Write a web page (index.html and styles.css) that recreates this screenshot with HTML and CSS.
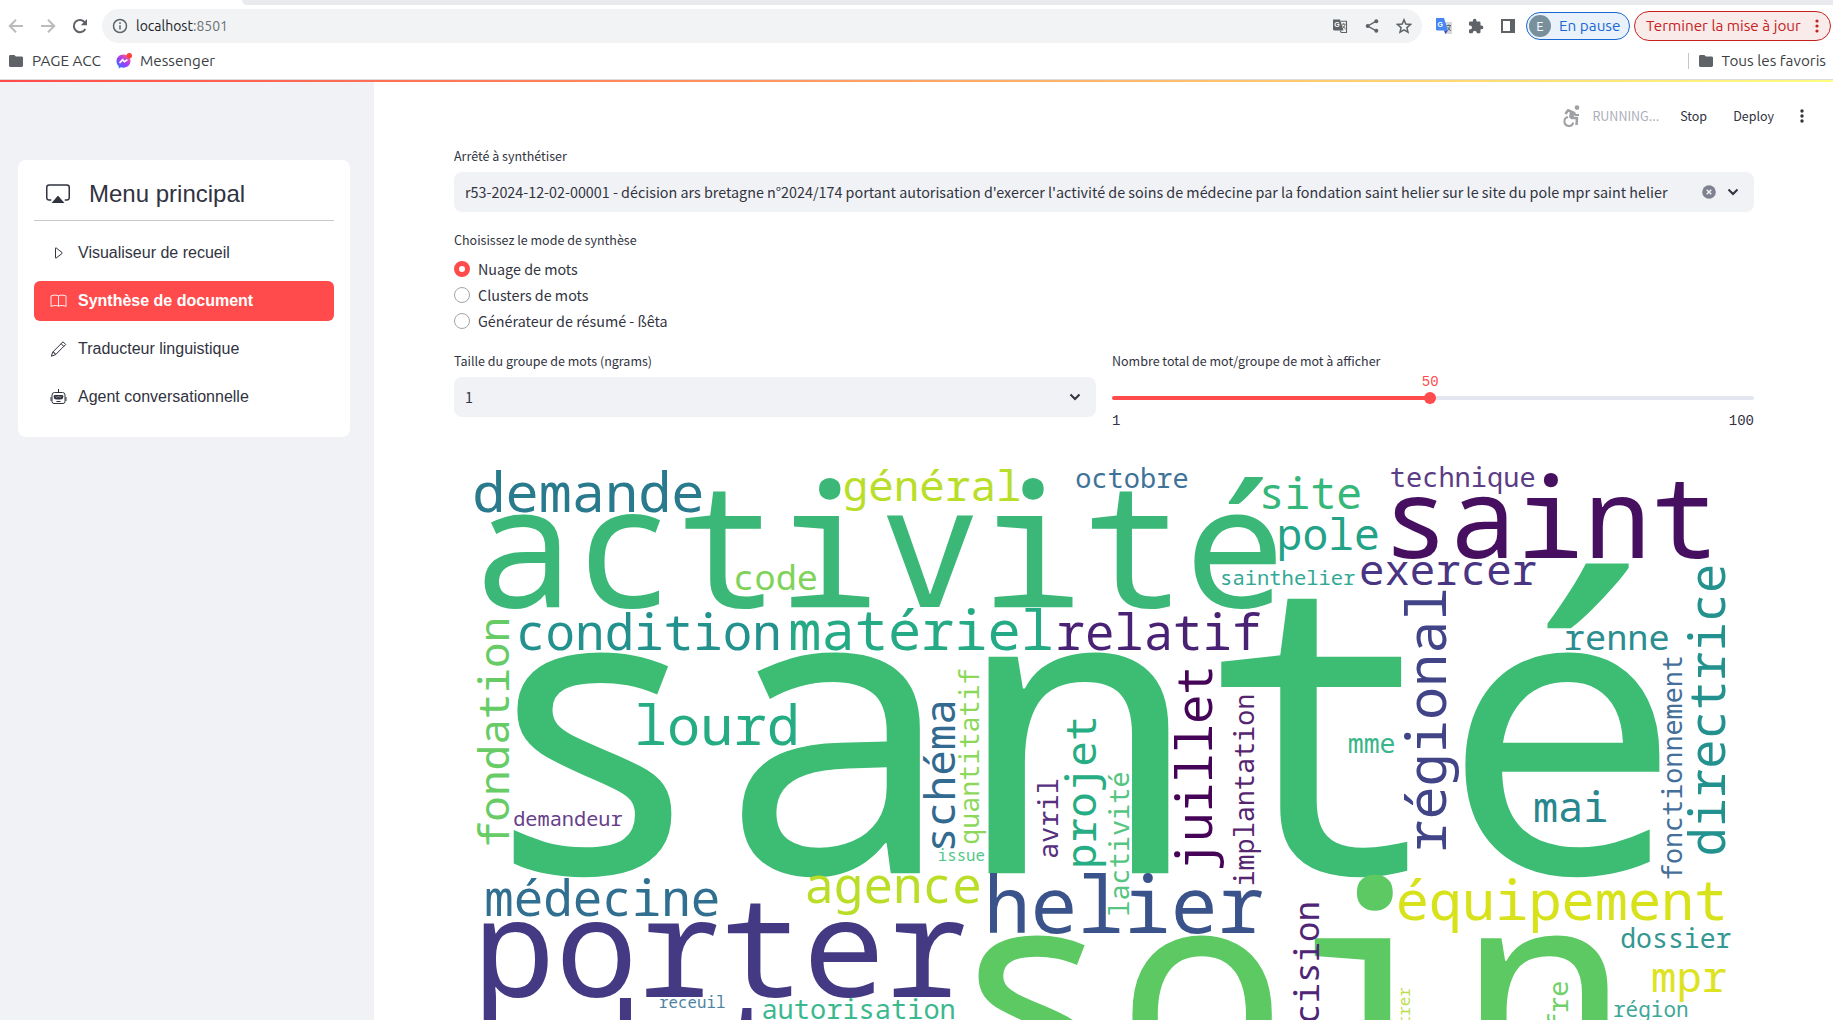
FILE: index.html
```html
<!DOCTYPE html>
<html lang="fr">
<head>
<meta charset="utf-8">
<title>Synthèse de document</title>
<link rel="stylesheet" href="styles.css">
</head>
<body>
<header class="browser">
  <div class="tabstrip"><div class="tab"></div><div class="tabrest"></div></div>
  <div class="toolbar">
    <svg class="nav dim" viewBox="0 0 16 16"><path d="M15 8H2M8 1.8 1.8 8 8 14.2"/></svg>
    <svg class="nav dim" viewBox="0 0 16 16"><path d="M1 8h13M8 1.8 14.2 8 8 14.2"/></svg>
    <svg class="nav" viewBox="0 0 16 16"><path d="M13.3 11A6.1 6.1 0 1 1 13 4.6"/><path d="M15 1v6.2H8.8z" fill="#5f6368" stroke="none"/></svg>
    <div class="address">
      <svg class="info" viewBox="0 0 16 16"><circle cx="8" cy="8" r="6.5"/><path d="M8 7.2v4.4M8 4.2v1.7"/></svg>
      <span class="url">localhost<span class="port">:8501</span></span>
      <svg class="pic tr" viewBox="0 0 16 16"><path d="M1 1.5h7l3.5 11H2.5A1.5 1.5 0 0 1 1 11z" fill="#5f6368"/><path d="M8.6 3.2h5.9v11.3H9.2l-1-2" fill="none" stroke="#5f6368" stroke-width="1.1"/><text x="2.3" y="9.2" class="gl">G</text><path d="M9.7 6.2h4M11.6 5.2v1M10.3 10.7c1.6-1 2.4-2.5 2.6-4.3M10.6 7.7l3 3.6" fill="none" stroke="#5f6368" stroke-width=".9"/></svg>
      <svg class="pic" viewBox="0 0 16 16"><path d="M12.3 3.2 3.7 8l8.600 4.800" fill="none" stroke="#5f6368" stroke-width="1.400"/><g fill="#5f6368"><circle cx="12.300" cy="3.200" r="2"/><circle cx="3.700" cy="8" r="2"/><circle cx="12.300" cy="12.800" r="2"/></g></svg>
      <svg class="pic" viewBox="0 0 16 16"><path d="m8 1.800 1.800 4.300 4.700.4-3.600 3.100 1.100 4.600L8 11.800l-4 2.400 1.100-4.600-3.600-3.100 4.700-.4z" fill="none" stroke="#5f6368" stroke-width="1.500"/></svg>
    </div>
    <div class="extensions">
      <svg class="pic" viewBox="0 0 16 16"><path d="M7 4h9v12H9z" fill="#d5d7da"/><path d="M0 0h8l4 12.500H1.200A1.200 1.200 0 0 1 0 11.300z" fill="#4687f4"/><path d="M8 12.500h4L9.500 16z" fill="#3a4bb8"/><text x="1.600" y="9" class="gl">G</text><path d="M10.500 7.500h4.500M12.700 6.500v1M11.500 12.500c1.600-1 2.400-2.800 2.600-4.800M11.600 9l3 4" fill="none" stroke="#5d6d7a"/></svg>
      <svg class="pic" viewBox="0 0 16 16"><path d="M13.500 7.600h-1V4.800c0-.7-.6-1.300-1.300-1.300H8.500V2.600a1.800 1.800 0 0 0-3.600 0v.9H2.200C1.500 3.500 1 4.100 1 4.800v2.600h1a2 2 0 0 1 0 4H1V14c0 .7.500 1.300 1.200 1.300h2.600v-1a2 2 0 0 1 3.900 0v1h2.500c.700 0 1.300-.6 1.300-1.300v-2.700h1a1.850 1.850 0 0 0 0-3.700z" fill="#5f6368"/></svg>
      <svg class="pic" viewBox="0 0 16 16"><path d="M1 1h14v14H1zM3 3v10h7V3z" fill="#5f6368" fill-rule="evenodd"/></svg>
    </div>
    <div class="profile"><span class="avatar">E</span>En pause</div>
    <div class="update">Terminer la mise à jour
      <svg width="4" height="14" viewBox="0 0 4 14" fill="#c5221f"><circle cx="2" cy="2" r="1.600"/><circle cx="2" cy="7" r="1.600"/><circle cx="2" cy="12" r="1.600"/></svg>
    </div>
  </div>
  <div class="bookmarks">
    <svg class="folder" viewBox="0 0 14 12"><path d="M1.400 0h4l1.500 1.500h5.700c.800 0 1.400.600 1.400 1.400v7.700c0 .800-.6 1.400-1.400 1.400H1.400C.6 12 0 11.400 0 10.600V1.400C0 .6.6 0 1.400 0z"/></svg>
    <span class="bm first">PAGE ACC</span>
    <svg class="msgr" viewBox="0 0 16 16"><defs><linearGradient id="mg" x1="0" y1="1" x2=".8" y2="0"><stop offset="0" stop-color="#168aff"/><stop offset=".5" stop-color="#9a3bff"/><stop offset="1" stop-color="#ff5a8c"/></linearGradient></defs><path d="M7.500 1.500C3.500 1.500.5 4.400.5 8.300c0 2 .8 3.700 2.200 4.900V15.500l2.200-1.200c.8.3 1.700.4 2.600.4 4 0 7-2.900 7-6.600S11.500 1.500 7.500 1.500z" fill="url(#mg)"/><path d="m3.500 10 3-3.200 2 1.800 3-2" fill="none" stroke="#fff" stroke-width="1.700"/><circle cx="13.300" cy="2.700" r="2.700" fill="#ff4136"/></svg>
    <span class="bm">Messenger</span>
    <div class="all"><svg class="folder" viewBox="0 0 14 12"><path d="M1.400 0h4l1.500 1.500h5.700c.800 0 1.400.600 1.400 1.400v7.700c0 .800-.6 1.400-1.400 1.400H1.400C.6 12 0 11.400 0 10.600V1.400C0 .6.6 0 1.400 0z"/></svg><span>Tous les favoris</span></div>
  </div>
</header>
<div class="decoration"></div>
<div class="app">
  <aside class="sidebar">
    <nav class="menu">
      <div class="menu-title">
        <svg width="24" height="24" viewBox="0 0 16 16" fill="none" stroke="#31333f"><path d="M3.500 12h-1.400A1.600 1.600 0 0 1 .5 10.500V3.600a1.600 1.600 0 0 1 1.600-1.600h11.800a1.600 1.600 0 0 1 1.600 1.600V10.500a1.600 1.600 0 0 1-1.600 1.500h-1.400"/><path d="M3.700 14 7.600 9.500a.5.5 0 0 1 .8 0l3.900 4.500z" fill="#31333f" stroke="none"/></svg>
        <span>Menu principal</span>
      </div>
      <a class="item"><svg viewBox="0 0 16 16"><path d="M5 3.200v9.600c0 .4.300.5.600.3l6-4.700c.3-.2.300-.6 0-.8l-6-4.700c-.3-.2-.6-.1-.6.300z"/></svg>Visualiseur de recueil</a>
      <a class="item active"><svg viewBox="0 0 16 16"><path d="M8 2.900C6.300 1.800 3 1.900.5 2.900v10.500c2.300-1 5.700-1.200 7.500-.2 1.800-1 5.200-.8 7.500.2V2.900C13 1.900 9.700 1.800 8 2.900zV13"/></svg>Synthèse de document</a>
      <a class="item"><svg viewBox="0 0 16 16"><path d="M12.500.8 15.200 3.500 5 13.700.8 15.200 2.300 11zM10.600 2.700l2.700 2.700M2.300 11l1.400.5v.8h.9L5 13.700"/></svg>Traducteur linguistique</a>
      <a class="item"><svg viewBox="0 0 16 16"><path d="M8 3V0M4 3.500h8A2.500 2.500 0 0 1 14.500 6v6.500A2 2 0 0 1 12.500 14.500h-9a2 2 0 0 1-2-2V6A2.500 2.500 0 0 1 4 3.500zM.5 8v4M15.500 8v4M6 12.500h4"/><path d="M4.500 6h7a1.400 1.400 0 0 1 1.400 1.400l-.5 1.800c-.3.800-.9 1-1.500 1.100-2 .3-4 .3-5.900 0-.6-.1-1.200-.3-1.400-1.100L3.100 7.400A1.400 1.400 0 0 1 4.500 6z" fill="#31333f" stroke="none"/><path d="m5 7.400 1.300.9 1.700-.9 1.700.9L11 7.400" stroke="#fff" stroke-width=".5"/></svg>Agent conversationnelle</a>
    </nav>
  </aside>
  <main class="main">
    <div class="status">
      <svg width="17" height="22" viewBox="0 0 17 22" fill="none" stroke="#9fa0a4"><circle cx="14" cy="2.600" r="2.300" fill="#9fa0a4" stroke="none"/><path d="M2.500 9 5 5.200l6 2.800-2.500 5h5.500l-.5 7" stroke-width="2.500" stroke-linejoin="round"/><path d="M7 6l5 2.500-3.500 5-2.500-1z" fill="#9fa0a4" stroke="none"/><path d="M11 8l1.500 2H16" stroke-width="2.200"/><path d="M5 12a4.500 4.500 0 1 0 5.300 5.500" stroke-width="2"/></svg>
      <span class="running">RUNNING...</span><span class="stop">Stop</span><span class="deploy">Deploy</span>
      <svg class="kebab" width="4" height="14" viewBox="0 0 4 14" fill="#31333f"><circle cx="2" cy="2" r="1.700"/><circle cx="2" cy="7" r="1.700"/><circle cx="2" cy="12" r="1.700"/></svg>
    </div>
    <div class="label">Arrêté à synthétiser</div>
    <div class="select">
      <span class="value">r53-2024-12-02-00001 - décision ars bretagne n°2024/174 portant autorisation d'exercer l'activité de soins de médecine par la fondation saint helier sur le site du pole mpr saint helier</span>
      <svg width="14" height="14" viewBox="0 0 14 14"><circle cx="7" cy="7" r="6.800" fill="#7f828e"/><path d="m4.700 4.700 4.600 4.600m0-4.600L4.700 9.300" stroke="#f0f2f6" stroke-width="1.500"/></svg>
      <svg class="chev" width="12" height="8" viewBox="0 0 12 8"><path d="m1.500 1.500 4.500 4.500 4.500-4.500"/></svg>
    </div>
    <div class="label second">Choisissez le mode de synthèse</div>
    <div class="radios">
      <label class="radio on"><i></i>Nuage de mots</label>
      <label class="radio"><i></i>Clusters de mots</label>
      <label class="radio"><i></i>Générateur de résumé - ßêta</label>
    </div>
    <div class="cols">
      <div class="col">
        <div class="label">Taille du groupe de mots (ngrams)</div>
        <div class="select"><span class="value">1</span><svg class="chev" width="12" height="8" viewBox="0 0 12 8"><path d="m1.500 1.500 4.500 4.500 4.500-4.500"/></svg></div>
      </div>
      <div class="col">
        <div class="label">Nombre total de mot/groupe de mot à afficher</div>
        <div class="slider">
          <div class="track"><div class="thumb" style="left:49.495%"><span>50</span></div></div>
          <div class="ticks"><span>1</span><span>100</span></div>
        </div>
      </div>
    </div>
    <svg class="cloud" width="1300" height="564" viewBox="454 455.500 1300 564">
      <text x="471.3" y="872.7" font-size="404.1" fill="#3dbc74">santé</text>
      <text x="946.1" y="1090.300" font-size="284.5" fill="#5dc963">soin</text>
      <text x="472.8" y="606.7" font-size="169.4" fill="#3bb878">activité</text>
      <text x="472.800" y="996" font-size="137.500" fill="#443a83">porter</text>
      <text x="566.500" y="1092.400" font-size="124" fill="#443a83">date</text>
      <text x="1381.9" y="557.7" font-size="112.1" fill="#460f60">saint</text>
      <text x="983.8" y="932.7" font-size="77.9" fill="#3a538b">helier</text>
      <text x="472.3" y="511.7" font-size="55.3" fill="#2a7a8e">demande</text>
      <text x="842.7" y="500.7" font-size="42.6" fill="#b8de29">général</text>
      <text x="1075.2" y="487.7" font-size="27" fill="#3f7299">octobre</text>
      <text x="1258.800" y="508.7" font-size="43" fill="#35b779">site</text>
      <text x="1276.6" y="549.3" font-size="43" fill="#22a287">pole</text>
      <text x="1220.1" y="584.7" font-size="20.5" fill="#33a896">sainthelier</text>
      <text x="733.3" y="589" font-size="35.3" fill="#7fd35a">code</text>
      <text x="1389.8" y="486.3" font-size="27" fill="#5a3d84">technique</text>
      <text x="1359" y="584.3" font-size="42.400" fill="#4a3582">exercer</text>
      <text x="516.1" y="649.3" font-size="49.2" fill="#23918d">condition</text>
      <text x="788.2" y="649.3" font-size="55.4" fill="#24aa84">matériel</text>
      <text x="1055.500" y="649.3" font-size="49" fill="#4a2275">relatif</text>
      <text x="633.9" y="744.3" font-size="55.4" fill="#26ac82">lourd</text>
      <text x="1563.800" y="649.3" font-size="35.300" fill="#2c8d90">renne</text>
      <text x="1347.7" y="752.3" font-size="26.6" fill="#39b58a">mme</text>
      <text x="1532.9" y="821.7" font-size="42" fill="#28868e">mai</text>
      <text x="513.2" y="825.3" font-size="20.3" fill="#67408c">demandeur</text>
      <text x="484.2" y="915" font-size="49.2" fill="#306f8f">médecine</text>
      <text x="804.3" y="902.3" font-size="49.3" fill="#bade28">agence</text>
      <text x="937.7" y="860" font-size="15.8" fill="#55c78d">issue</text>
      <text x="1395.7" y="919.7" font-size="55.3" fill="#d8e21b">équipement</text>
      <text x="1620.2" y="947" font-size="26.5" fill="#359792">dossier</text>
      <text x="1651" y="991" font-size="42.300" fill="#dde321">mpr</text>
      <text x="1613" y="1016.7" font-size="21" fill="#3fa898">région</text>
      <text x="659.1" y="1007.3" font-size="15.8" fill="#4e84a2">receuil</text>
      <text x="761.4" y="1018" font-size="27" fill="#3bb88e">autorisation</text>
      <g transform="rotate(-90)">
        <text x="-846.8" y="508.7" font-size="42.7" fill="#67cc66">fondation</text>
        <text x="-852.2" y="954.7" font-size="42.700" fill="#336a90">schéma</text>
        <text x="-844.2" y="978.7" font-size="26.7" fill="#8dd85b">quantitatif</text>
        <text x="-858.6" y="1058" font-size="27" fill="#562f7e">avril</text>
        <text x="-868.4" y="1096" font-size="42.6" fill="#27ad83">projet</text>
        <text x="-916.2" y="1129.3" font-size="26.9" fill="#55c581">lactivité</text>
        <text x="-870.6" y="1211.7" font-size="49" fill="#450457">juillet</text>
        <text x="-886.1" y="1254.3" font-size="26.8" fill="#562570">implantation</text>
        <text x="-852.300" y="1446" font-size="55.300" fill="#414487">régional</text>
        <text x="-856" y="1724.7" font-size="48.8" fill="#23918d">directrice</text>
        <text x="-879.7" y="1682" font-size="26.8" fill="#456f9b">fonctionnement</text>
        <text x="-1064.5" y="1319.3" font-size="34.200" fill="#4f2677">décision</text>
        <text x="-1061.1" y="1568" font-size="27" fill="#72d069">offre</text>
        <text x="-1053.2" y="1410" font-size="15.800" fill="#bbe04b">montrer</text>
      </g>
    </svg>
  </main>
</div>
</body>
</html>
```
FILE: styles.css
```css
* { box-sizing: border-box; }
body { margin: 0; height: 1020px; overflow: hidden; background: #fff; color: #31333f; font-family: "Noto Sans CJK SC", "Open Sans", sans-serif; }
svg { flex: none; display: block; }

/* Browser chrome */
.browser { height: 80px; border-bottom: 1px solid #dadce0; font: 15.300px/20px Ubuntu, "Noto Sans", sans-serif; color: #3c4043; background: #fff; }
.tabstrip { display: flex; height: 5px; background: #fff; }
.tab { width: 242px; }
.tabrest { flex: 1; background: #e8eaed; border-bottom-left-radius: 6px; }
.toolbar { display: flex; align-items: center; height: 42px; padding: 0 1px 0 8px; }
.nav { width: 16px; height: 16px; margin-right: 16px; fill: none; stroke: #5f6368; stroke-width: 2; }
.nav.dim { stroke: #babcbe; }
.address { display: flex; align-items: center; width: 1320px; height: 34px; margin-left: -2px; border-radius: 17px; background: #f1f3f4; padding: 0 10px; font-size: 14px; color: #202124; }
.info { width: 16px; height: 16px; fill: none; stroke: #5f6368; stroke-width: 1.500; }
.url { margin-left: 8px; flex: 1; }
.port { color: #6b6f73; }
.pic { width: 16px; height: 16px; }
.address .pic { margin-left: 16px; }
.gl { font: bold 7px "Liberation Sans", sans-serif; fill: #fff; }
.extensions { display: flex; gap: 16px; margin-left: 14px; }
.profile { display: flex; align-items: center; width: 104px; height: 28px; margin-left: 10px; padding-left: 2px; border: 1px solid #1967d2; border-radius: 14px; background: #e9f1fb; color: #1967d2; white-space: nowrap; }
.avatar { width: 22px; height: 22px; margin-right: 8px; border-radius: 50%; background: #78909c; color: #fff; font-size: 13px; line-height: 22px; text-align: center; }
.update { display: flex; align-items: center; justify-content: space-between; flex: none; width: 197px; height: 30px; margin-left: 4px; padding: 0 11px 0 11px; border: 1px solid #c5221f; border-radius: 15px; background: #f9ebe9; color: #c5221f; white-space: nowrap; }
.bookmarks { display: flex; align-items: center; height: 28px; padding: 0 7px 0 9px; }
.folder { width: 14px; height: 12px; fill: #5f6368; }
.bm { margin-left: 9px; }
.bm.first { margin-right: 15px; }
.msgr { width: 16px; height: 16px; margin-right: -1px; }
.all { display: flex; align-items: center; gap: 9px; height: 16px; margin-left: auto; padding-left: 10px; border-left: 1px solid #c4c7cb; }

/* Streamlit page */
.decoration { height: 2px; background: linear-gradient(90deg, #ff4b4b, #fffd80); }
.app { display: flex; height: 938px; }
.sidebar { width: 374px; background: #f0f2f6; padding: 78px 24px 0 18px; }
.menu { height: 277px; padding: 16px; border-radius: 8px; background: #fff; font-family: "Liberation Sans", Arial, sans-serif; }
.menu-title { display: flex; align-items: center; gap: 19px; height: 45px; padding: 0 12px 9px; border-bottom: 1px solid #c8c9ce; font-size: 24px; line-height: 36px; }
.item { display: flex; align-items: center; gap: 11px; height: 40px; margin-bottom: 8px; padding-left: 16px; border-radius: 6px; font-size: 16px; }
.menu-title + .item { margin-top: 12px; }
.item svg { width: 17px; height: 16px; fill: none; stroke: #31333f; }
.item.active { background: #ff4b4b; color: #fff; font-weight: 700; }
.item.active svg { stroke: #fff; stroke-width: .9; }
.main { flex: 1; padding: 0 79px 0 80px; }
.status { display: flex; align-items: center; height: 68px; margin-right: -50px; justify-content: flex-end; font-size: 12.500px; line-height: 20px; }
.running { margin-left: 12px; color: #acaeb9; }
.stop { margin-left: 21px; }
.deploy { margin-left: 26px; }
.kebab { margin-left: 26px; }
.label { height: 22px; font-size: 12.500px; line-height: 12px; }
.select { display: flex; align-items: center; height: 40px; padding: 0 15px 0 11px; border-radius: 8px; background: #f0f2f6; font-size: 14.330px; line-height: 20px; }
.value { flex: 1; white-space: nowrap; }
.select .chev { margin-left: 11px; }
.chev { fill: none; stroke: #31333f; stroke-width: 2; }
.label.second { margin-top: 22px; }
.radios { height: 99px; }
.radio { display: flex; align-items: center; gap: 8px; height: 26px; font-size: 14.330px; line-height: 20px; }
.radio i { width: 16px; height: 16px; border: 1px solid #a3a4aa; border-radius: 50%; background: #fff; }
.radio.on i { border: 5px solid #ff4b4b; }
.cols { display: flex; gap: 16px; height: 101px; }
.col { flex: 1; }
.slider { padding-top: 19px; font: 14px/16px "Liberation Mono", monospace; }
.track { height: 4px; border-radius: 4px; background: linear-gradient(90deg, #ff4b4b 49.495%, #e3e6ee 49.495%); position: relative; }
.thumb { position: absolute; top: -4px; width: 12px; height: 12px; margin-left: -6px; border-radius: 50%; background: #ff4b4b; color: #ff4b4b; }
.thumb span { position: absolute; left: -2px; top: -18px; }
.ticks { display: flex; justify-content: space-between; margin-top: 13px; }

.cloud { font-family: "Noto Sans Mono", "DejaVu Sans Mono", monospace; }
```
